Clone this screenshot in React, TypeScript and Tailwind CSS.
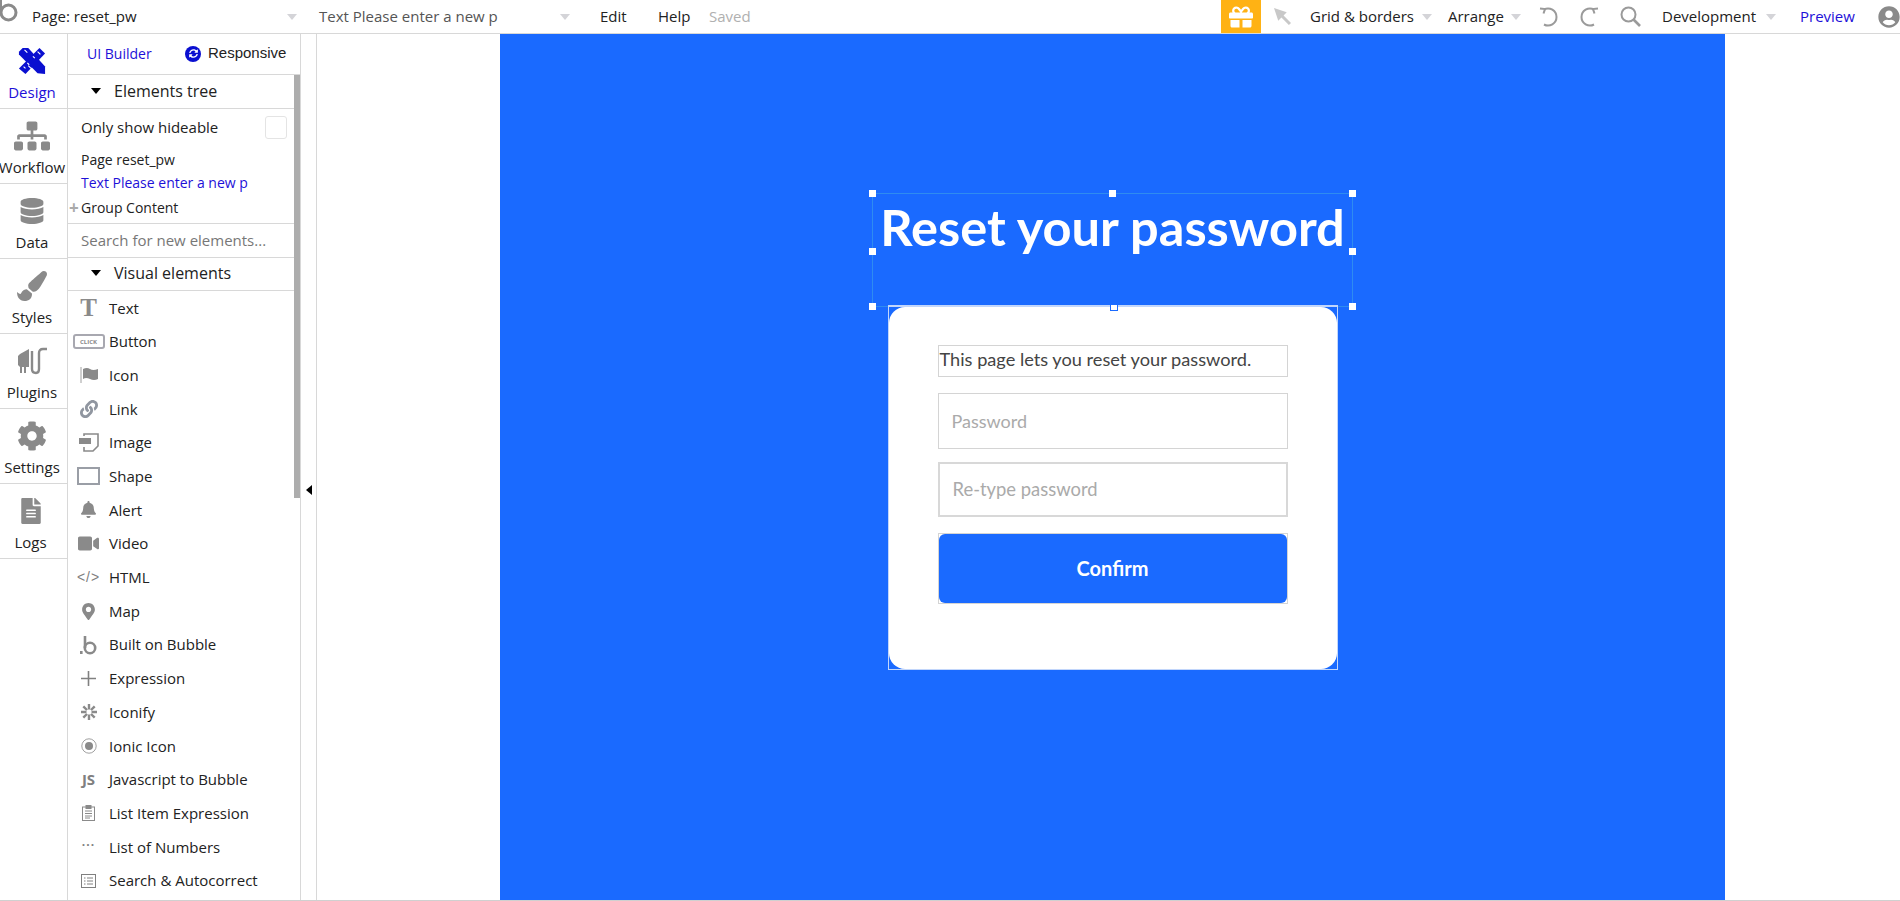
import React from "react";
import { FaSitemap, FaDatabase, FaPaintBrush, FaCog, FaFileAlt, FaGift, FaUserCircle, FaLink, FaBell, FaVideo, FaMapMarkerAlt, FaSyncAlt } from "react-icons/fa";

const G = "#8a8a8a";

function DesignIcon() {
  return (
    <svg width="28" height="28" viewBox="0 0 30 30" fill="#0a0fd0">
      <path d="M5 1 L11 1 L29 21 L29 29 L21 28 L1 8 L1 5 Z" />
      <path d="M23 1 L29 7 L8 29 L1 23 Z" />
      <path d="M7 3 l3 3 M11 20 l3 3" stroke="#fff" strokeWidth="1.2" />
      <path d="M21 5 l3 3 M16 10 l2 2 M10 17 l2 2 M6 21 l2 2" stroke="#fff" strokeWidth="1.2" />
    </svg>
  );
}
function PluginIcon() {
  return (
    <svg width="31" height="28" viewBox="0 0 31 28" fill={G}>
      <path d="M3 7 L12 2 L12 20 L9 20 L9 26 L7 26 L7 20 L5 20 L5 26 L3 26 L3 20 L1 18 L1 9 Z" />
      <path d="M15 4 V22 Q15 26 19 26 Q22 26 22 22 V6 Q22 2 26 2 H30" fill="none" stroke={G} strokeWidth="2.4" />
    </svg>
  );
}
function Caret({ c = "#d4d4d8", className = "" }: { c?: string; className?: string }) {
  return <span className={`inline-block shrink-0 w-0 h-0 border-l-[5px] border-r-[5px] border-t-[6px] border-l-transparent border-r-transparent ${className}`} style={{ borderTopColor: c }} />;
}

const tabs = [
  { n: "Design", i: <DesignIcon />, c: "text-[#1d10d8]", p: "pr-[3px]" },
  { n: "Workflow", i: <FaSitemap size={36} color={G} />, p: "pr-[3px]" },
  { n: "Data", i: <FaDatabase size={26} color={G} />, p: "pr-[3px]" },
  { n: "Styles", i: <FaPaintBrush size={30} color={G} />, p: "pr-[3px]" },
  { n: "Plugins", i: <PluginIcon />, p: "pr-[3px]" },
  { n: "Settings", i: <FaCog size={30} color={G} />, p: "pr-[3px]" },
  { n: "Logs", i: <FaFileAlt size={26} color={G} />, p: "pr-[6px]" },
];

const items: [string, React.ReactNode][] = [
  ["Text", <span className="font-['Liberation_Serif',serif] font-bold text-[25px] leading-none text-[#8a8a8a]">T</span>],
  ["Button", <span className="w-[32px] h-[15px] border-2 border-[#a8a8b0] rounded-[3px] text-[6px] font-bold text-[#8a8a8a] flex items-center justify-center leading-none">CLICK</span>],
  ["Icon", <svg width="18" height="16" viewBox="0 0 18 16"><path d="M1 0 V16" stroke="#a0a0a0" strokeWidth="1" /><path d="M3 2 Q7 0 10 2 T18 2 V12 Q14 14 10 12 T3 12 Z" fill={G} /></svg>],
  ["Link", <FaLink size={18} color="#9096a0" />],
  ["Image", <svg width="20" height="19" viewBox="0 0 20 19"><path d="M5 3 V1 H19 V13 L14 18 H5 V14" fill="none" stroke={G} strokeWidth="1.6" /><rect x="0" y="5" width="12" height="6" fill={G} /></svg>],
  ["Shape", <span className="w-[23px] h-[18px] border-2 border-[#9a9ea6]" />],
  ["Alert", <FaBell size={17} color={G} />],
  ["Video", <FaVideo size={21} color={G} />],
  ["HTML", <span className="font-['Liberation_Sans',sans-serif] text-[#808080] text-[14px] tracking-[1px] leading-none">&lt;/&gt;</span>],
  ["Map", <FaMapMarkerAlt size={17} color={G} />],
  ["Built on Bubble", <svg width="18" height="20" viewBox="0 0 18 20" fill="none" stroke={G} strokeWidth="2.6"><path d="M5 1 V13" /><circle cx="10" cy="13" r="5.2" /><rect x="0" y="16" width="2.6" height="3" fill={G} stroke="none" /></svg>],
  ["Expression", <svg width="15" height="15" viewBox="0 0 15 15" stroke="#808080" strokeWidth="1.6"><path d="M7.5 0 V15 M0 7.5 H15" /></svg>],
  ["Iconify", <svg width="16" height="16" viewBox="0 0 16 16" stroke={G} strokeWidth="2.4"><path d="M8 0 V5.5 M8 10.5 V16 M0 8 H5.5 M10.5 8 H16 M2.3 2.3 L6 6 M10 10 L13.7 13.7 M13.7 2.3 L10 6 M6 10 L2.3 13.7" /></svg>],
  ["Ionic Icon", <svg width="16" height="16" viewBox="0 0 16 16"><circle cx="8" cy="8" r="7.2" fill="none" stroke="#a0a0a0" strokeWidth="1" /><circle cx="8" cy="8" r="4" fill={G} /></svg>],
  ["Javascript to Bubble", <span className="font-['Open_Sans',sans-serif] font-bold text-[15px] leading-none text-[#808080]">JS</span>],
  ["List Item Expression", <svg width="13" height="16" viewBox="0 0 13 16" fill="none" stroke="#8a8a8a"><rect x=".5" y="2" width="12" height="13.5" /><rect x="4" y=".5" width="5" height="3" fill="#8a8a8a" /><path d="M3 6 H10 M3 8.5 H10 M3 11 H10 M3 13 H8" /></svg>],
  ["List of Numbers", <span className="text-[#808080] text-[12px] tracking-[1px] leading-none font-bold -mt-1">···</span>],
  ["Search & Autocorrect", <svg width="15" height="14" viewBox="0 0 15 14" fill="none" stroke="#808080"><rect x=".5" y=".5" width="14" height="13" /><path d="M3 4 H4.5 M6 4 H12 M3 7 H4.5 M6 7 H12 M3 10 H4.5 M6 10 H12" /></svg>],
];

function Handle({ className }: { className: string }) {
  return <span className={`absolute w-[7px] h-[7px] bg-white ${className}`} />;
}

export default function App() {
  return (
    <div className="w-[1900px] h-[901px] overflow-hidden bg-white flex flex-col font-['Open_Sans',sans-serif] text-[15px] text-[#222]">
      {/* top bar */}
      <header className="h-[34px] shrink-0 border-b border-[#d8d8d8] flex items-center overflow-hidden whitespace-nowrap">
        <svg className="ml-[-1px] shrink-0 self-start" width="19" height="24" viewBox="0 0 19 24" fill="none" stroke="#8a8a8a" strokeWidth="3"><path d="M1.5 0 V12" /><circle cx="9.5" cy="12.5" r="7.5" /></svg>
        <span className="ml-[14px] w-[255px] shrink-0">Page: reset_pw</span>
        <Caret />
        <span className="ml-[22px] w-[241px] shrink-0 text-[#555]">Text Please enter a new p</span>
        <Caret />
        <span className="ml-[30px] w-[58px] shrink-0">Edit</span>
        <span className="w-[51px] shrink-0">Help</span>
        <span className="w-[41px] shrink-0 text-[#b0b0b0]">Saved</span>
        <span className="ml-[471px] w-[40px] h-[33px] bg-[#ffb214] flex items-center justify-center shrink-0"><FaGift size={24} color="#fff" /></span>
        <svg className="ml-[13px] shrink-0" width="17" height="17" viewBox="0 0 16 16" fill="#c8c8c8"><path d="M0 0 L12 4 L9 7 L16 14 L14 16 L7 9 L4 12 Z" /></svg>
        <span className="ml-[19px] w-[103px] shrink-0">Grid &amp; borders</span>
        <Caret className="ml-[9px]" />
        <span className="ml-[16px] w-[55px] shrink-0">Arrange</span>
        <Caret className="ml-[8px]" />
        <svg className="ml-[18px] shrink-0" width="20" height="22" viewBox="0 0 20 22" fill="none" stroke="#9a9a9a" strokeWidth="2"><path d="M5 3.5 A8.5 8.5 0 1 1 5 18.5" /><path d="M1 2.5 L6 3 L4.5 7.5" /></svg>
        <svg className="ml-[20px] shrink-0" width="20" height="22" viewBox="0 0 20 22" fill="none" stroke="#9a9a9a" strokeWidth="2"><path d="M15 3.5 A8.5 8.5 0 1 0 15 18.5" /><path d="M19 2.5 L14 3 L15.5 7.5" /></svg>
        <svg className="ml-[21px] shrink-0" width="21" height="21" viewBox="0 0 21 21" fill="none" stroke="#9a9a9a" strokeWidth="2"><circle cx="8.5" cy="8.5" r="7" /><path d="M13.5 13.5 L20 20" strokeWidth="2.6" /></svg>
        <span className="ml-[21px] w-[94px] shrink-0">Development</span>
        <Caret className="ml-[10px]" />
        <span className="ml-[24px] w-[54px] shrink-0 text-[#1d10d8]">Preview</span>
        <FaUserCircle className="ml-[24px] shrink-0" size={22} color="#8a8a8a" />
      </header>

      <div className="flex-1 flex min-h-0 border-b border-[#d0d0d0]">
        {/* tabs */}
        <nav className="w-[68px] shrink-0 border-r border-[#d8d8d8]">
          {tabs.map((t) => (
            <div key={t.n} className={`h-[75px] border-b border-[#d8d8d8] flex flex-col items-center ${t.p} ${t.c ?? "text-[#222]"}`}>
              <div className="h-[49px] pt-[5px] flex items-center justify-center">{t.i}</div>
              <span className="leading-[19px] whitespace-nowrap">{t.n}</span>
            </div>
          ))}
        </nav>

        {/* panel */}
        <aside className="w-[233px] shrink-0 border-r border-[#d8d8d8] flex flex-col relative">
          <div className="h-[41px] shrink-0 border-b border-[#d8d8d8] flex items-center pl-[19px] pb-[1px]">
            <span className="text-[#1d10d8] w-[98px] text-[14px]">UI Builder</span>
            <span className="w-[16px] h-[16px] rounded-full bg-[#0a0fd0] flex items-center justify-center"><FaSyncAlt size={9} color="#fff" /></span>
            <span className="ml-[7px] font-['Liberation_Sans',sans-serif] text-[15px]">Responsive</span>
          </div>
          <div className="w-[226px] flex flex-col flex-1 min-h-0">
            <div className="h-[34px] shrink-0 border-b border-[#d8d8d8] flex items-center pl-[23px] pb-[1px]">
              <Caret c="#000" />
              <span className="ml-[13px] text-[16px]">Elements tree</span>
            </div>
            <div className="h-[36px] shrink-0 flex items-center justify-between pl-[13px] pr-[7px]">
              <span>Only show hideable</span>
              <span className="w-[22px] h-[23px] border border-[#e4e4e4] rounded-[3px]" />
            </div>
            <div className="h-[79px] shrink-0 border-b border-[#d8d8d8] pl-[13px] text-[14px] relative">
              <div className="h-[23px] mt-[3px] leading-[23px]">Page reset_pw</div>
              <div className="h-[24px] leading-[24px] text-[#1d10d8]">Text Please enter a new p</div>
              <div className="h-[25px] leading-[25px]">Group Content</div>
              <span className="absolute left-[1px] top-[50px] text-[#aaa] text-[17px] font-bold leading-[25px]">+</span>
            </div>
            <div className="h-[34px] shrink-0 border-b border-[#d8d8d8] pl-[13px] flex items-center text-[#777]">Search for new elements...</div>
            <div className="h-[33px] shrink-0 border-b border-[#d8d8d8] flex items-center pl-[23px] pb-[3px]">
              <Caret c="#000" />
              <span className="ml-[13px] text-[16px]">Visual elements</span>
            </div>
            {items.map(([n, i]) => (
              <div key={n} className="h-[33.7px] shrink-0 flex items-center">
                <span className="w-[41px] shrink-0 flex justify-center">{i}</span>
                <span>{n}</span>
              </div>
            ))}
          </div>
          <span className="absolute right-0 top-[41px] w-[6px] h-[423px] bg-[#adadad]" />
        </aside>

        {/* collapse strip */}
        <div className="w-[16px] shrink-0 border-r border-[#d8d8d8] flex items-center justify-center h-full">
          <span className="mt-[46px] w-0 h-0 border-y-[5px] border-y-transparent border-r-[6px] border-r-black" />
        </div>

        {/* canvas */}
        <main className="flex-1 min-w-0 pl-[183px]">
          <div className="w-[1225px] h-full bg-[#1a6aff] flex flex-col items-center pt-[159px] overflow-hidden">
            <div className="relative w-[481px] h-[114px] border border-[#2f8cf0] shrink-0 text-center">
              <Handle className="-left-[4px] -top-[4px]" />
              <Handle className="left-[236px] -top-[4px]" />
              <Handle className="-right-[4px] -top-[4px]" />
              <Handle className="-left-[4px] top-[54px]" />
              <Handle className="-right-[4px] top-[54px]" />
              <Handle className="-left-[4px] -bottom-[4px]" />
              <Handle className="-right-[4px] -bottom-[4px]" />
              <h1 className="text-white font-bold text-[50.5px] leading-[66px] font-['Lato',sans-serif] whitespace-nowrap">Reset your password</h1>
            </div>
            <div className="relative -mt-[2px] w-[450px] h-[365px] border border-t-2 border-[#c2d6fb] shrink-0">
              <span className="absolute left-[221px] -top-[3px] w-[8px] h-[7px] bg-white border border-[#1a6aff]" />
              <div className="h-full bg-white rounded-[16px] pt-[38px] px-[49px] font-['Lato',sans-serif]">
                <div className="h-[32px] border border-[#d4d4d4] px-[1px] text-[18.2px] leading-[26px] text-[#444] whitespace-nowrap">This page lets you reset your password.</div>
                <div className="h-[56px] mt-[16px] border border-[#d4d4d4] pl-[13px] flex items-center text-[18px] text-[#aaa]">Password</div>
                <div className="h-[55px] mt-[13px] border-2 border-[#d8d8d8] pl-[13px] flex items-center text-[18.4px] text-[#aaa]">Re-type password</div>
                <div className="h-[71px] mt-[16px] border border-[#d4d4d4] flex">
                  <div className="flex-1 bg-[#1a6aff] rounded-[6px] flex items-center justify-center pb-[2px] text-white font-bold text-[20px]">Confirm</div>
                </div>
              </div>
            </div>
          </div>
        </main>
      </div>
    </div>
  );
}
